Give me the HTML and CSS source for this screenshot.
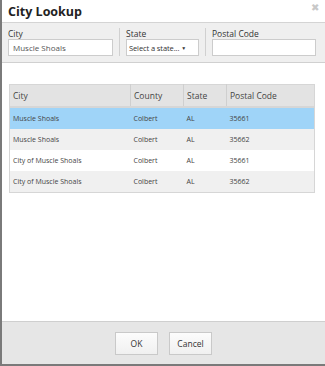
FILE: index.html
```html
<!DOCTYPE html>
<html lang="en">
<head>
<meta charset="UTF-8">
<title>City Lookup</title>
<link rel="stylesheet" href="styles.css">
</head>
<body>
<div class="dialog">
  <div class="titlebar">
    <h1>City Lookup</h1>
    <span class="close">&#10006;</span>
  </div>
  <div class="filters">
    <div class="field field-city">
      <label for="city">City</label>
      <input type="text" id="city" value="Muscle Shoals">
    </div>
    <div class="field field-state">
      <label>State</label>
      <div class="select">Select a state... <span class="arrow">&#9660;</span></div>
    </div>
    <div class="field field-zip">
      <label for="zip">Postal Code</label>
      <input type="text" id="zip">
    </div>
  </div>
  <div class="content">
    <table class="results">
      <thead>
        <tr><th class="c-city">City</th><th class="c-county">County</th><th class="c-state">State</th><th>Postal Code</th></tr>
      </thead>
      <tbody>
        <tr class="selected"><td>Muscle Shoals</td><td>Colbert</td><td>AL</td><td>35661</td></tr>
        <tr class="alt"><td>Muscle Shoals</td><td>Colbert</td><td>AL</td><td>35662</td></tr>
        <tr><td>City of Muscle Shoals</td><td>Colbert</td><td>AL</td><td>35661</td></tr>
        <tr class="alt"><td>City of Muscle Shoals</td><td>Colbert</td><td>AL</td><td>35662</td></tr>
      </tbody>
    </table>
  </div>
  <div class="footer">
    <button>OK</button>
    <button>Cancel</button>
  </div>
</div>
</body>
</html>
```

FILE: styles.css
```css
html, body {
  margin: 0;
  height: 100%;
}
body {
  font-family: "Open Sans", Arial, sans-serif;
  color: #333;
  background: #fff;
}
.dialog {
  height: 366px;
  box-sizing: border-box;
  border-left: 2px solid #7a7a7a;
  border-bottom: 2px solid #7a7a7a;
  display: flex;
  flex-direction: column;
}
.titlebar {
  height: 22px;
  display: flex;
  align-items: center;
  justify-content: space-between;
  padding: 0 6px 0 6px;
  border-bottom: 1px solid #d4d4d4;
}
.titlebar h1 {
  margin: 0;
  font-size: 12.5px;
  font-weight: bold;
  color: #222;
}
.close {
  color: #c8c8c8;
  font-size: 10px;
  margin-top: -8px;
}
.filters {
  display: flex;
  background: #efefef;
  border-bottom: 1px solid #d0d0d0;
  padding: 5px 0 6px 6px;
}
.field {
  display: flex;
  flex-direction: column;
  padding-right: 6px;
}
.field label {
  font-size: 8.5px;
  line-height: 11px;
  color: #333;
}
.field-city {
  width: 105px;
}
.field-state {
  width: 73px;
  border-left: 1px solid #d0d0d0;
  padding-left: 6px;
}
.field-zip {
  border-left: 1px solid #d0d0d0;
  padding-left: 6px;
}
.field input, .select {
  box-sizing: border-box;
  height: 17px;
  border: 1px solid #ccc;
  background: #fff;
  font-family: inherit;
  font-size: 8px;
  color: #444;
  padding: 0 4px;
  margin: 0;
}
.field-city input {
  width: 105px;
  color: #555;
}
.field-zip input {
  width: 104px;
}
.select {
  width: 73px;
  display: flex;
  align-items: center;
  white-space: nowrap;
  overflow: hidden;
  padding: 0 2px;
  gap: 2px;
  font-size: 7.5px;
  letter-spacing: -0.1px;
  color: #333;
}
.arrow {
  font-size: 5px;
}
.content {
  flex: 1;
  padding: 21px 10px 0 7px;
}
.results {
  width: 100%;
  border-collapse: collapse;
  border: 1px solid #d6d6d6;
  font-size: 7px;
}
.results th {
  background: #e3e3e3;
  font-weight: normal;
  font-size: 8.5px;
  text-align: left;
  height: 21px;
  padding: 0 0 0 3px;
  border-left: 1px solid #cfcfcf;
  border-bottom: 2px solid #d6d6d6;
  color: #444;
}
.results th:first-child {
  border-left: none;
}
.results .c-city { width: 117px; }
.results .c-county { width: 49px; }
.results .c-state { width: 39px; }
.results td {
  height: 21px;
  padding: 0 0 0 3px;
  color: #444;
}
.results tr.selected td {
  background: #9fd4f8;
}
.results tr.alt td {
  background: #f0f0f0;
}
.footer {
  height: 42px;
  background: #e6e6e6;
  border-top: 1px solid #cfcfcf;
  display: flex;
  justify-content: center;
  align-items: center;
  gap: 11px;
}
.footer button {
  width: 43px;
  height: 23px;
  border: 1px solid #c9c9c9;
  background: linear-gradient(#fcfcfc, #f0f0f0);
  font-family: inherit;
  font-size: 8.5px;
  color: #333;
  padding: 0;
}
```
